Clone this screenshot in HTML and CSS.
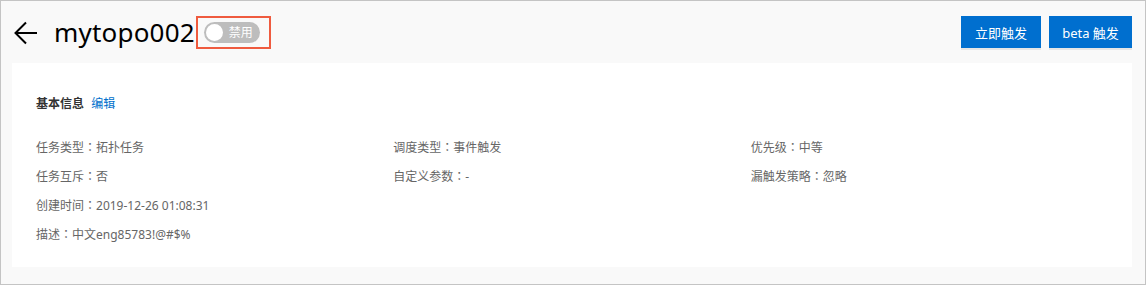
FILE: index.html
```html
<!DOCTYPE html>
<html>
<head>
<meta charset="UTF-8">
  <title>mytopo002</title>
  <link rel="stylesheet" href="styles.css">
</head>
<body>
  <div class="frame">
    <div class="topbar">
      <div class="title-wrap">
        <span class="back">
          <svg viewBox="0 0 24 24" fill="none" stroke="#000" stroke-width="2">
            <path d="M23 12H2M12 1.5L1.5 12L12 22.5" />
          </svg>
        </span>
        <h1>mytopo002</h1>
        <div class="highlight">
          <span class="switch"><span class="knob"></span>禁用</span>
        </div>
      </div>
      <div class="actions">
        <button class="btn btn-now">立即触发</button>
        <button class="btn btn-beta">beta 触发</button>
      </div>
    </div>

    <div class="card">
      <div class="card-title">基本信息 <a href="#">编辑</a></div>
      <div class="info-grid">
        <div class="info-item">任务类型<span class="sep">：</span>拓扑任务</div>
        <div class="info-item">调度类型<span class="sep">：</span>事件触发</div>
        <div class="info-item">优先级<span class="sep">：</span>中等</div>
        <div class="info-item">任务互斥<span class="sep">：</span>否</div>
        <div class="info-item">自定义参数<span class="sep">：</span>-</div>
        <div class="info-item">漏触发策略<span class="sep">：</span>忽略</div>
        <div class="info-item wide">创建时间<span class="sep">：</span>2019-12-26 01:08:31</div>
        <div class="info-item wide">描述<span class="sep">：</span>中文eng85783!@#$%</div>
      </div>
    </div>
  </div>
</body>
</html>
```

FILE: styles.css
```css
body {
  margin: 0;
  background: #fff;
  font-family: "Noto Sans", "Noto Sans CJK SC", sans-serif;
  color: #333;
}

.frame {
  width: 1146px;
  height: 285px;
  box-sizing: border-box;
  border: 1px solid #c4c4c4;
  background: #f9f9f9;
  padding: 0 13px 0 11px;
}

.topbar {
  height: 62px;
  display: flex;
  align-items: center;
  justify-content: space-between;
}

.title-wrap {
  display: flex;
  align-items: center;
}

.back {
  display: flex;
  width: 24px;
  height: 24px;
  margin-left: 2px;
  margin-top: 2px;
}

.back svg {
  width: 24px;
  height: 24px;
}

.title-wrap h1 {
  margin: 0 0 0 16px;
  font-size: 26px;
  font-weight: 400;
  color: #000;
  line-height: 32px;
  letter-spacing: 0.2px;
}

.highlight {
  margin-left: 1px;
  border: 2px solid #ef5b3f;
  padding: 4px 9px 4px 6px;
  display: flex;
}

.switch {
  position: relative;
  display: inline-flex;
  align-items: center;
  width: 56px;
  height: 21px;
  box-sizing: border-box;
  padding-left: 25px;
  border-radius: 11px;
  background: #bdbdbd;
  color: #fff;
  font-size: 12px;
}

.knob {
  position: absolute;
  left: 2px;
  top: 2px;
  width: 17px;
  height: 17px;
  border-radius: 50%;
  background: #fff;
}

.actions {
  display: flex;
  gap: 8px;
}

.btn {
  height: 32px;
  padding: 0;
  border: none;
  background: #006fcf;
  color: #fff;
  font-family: inherit;
  font-size: 13px;
  box-shadow: 0 2px 0 #e6e6e6;
  cursor: pointer;
}

.btn-now {
  width: 80px;
}

.btn-beta {
  width: 83px;
}

.card {
  background: #fff;
  height: 204px;
  box-sizing: border-box;
  padding: 31px 24px 0;
}

.card-title {
  font-size: 12px;
  font-weight: 700;
  line-height: 20px;
  color: #333;
  margin-bottom: 19px;
}

.card-title a {
  margin-left: 4px;
  color: #0070cc;
  font-weight: 400;
  text-decoration: none;
}

.info-grid {
  display: grid;
  grid-template-columns: repeat(3, 1fr);
}

.info-item {
  font-size: 12px;
  line-height: 28px;
  color: #666;
}

.info-item .sep {
  font-family: "Noto Sans CJK JP", sans-serif;
}

.info-item.wide {
  grid-column: 1 / -1;
}
```
